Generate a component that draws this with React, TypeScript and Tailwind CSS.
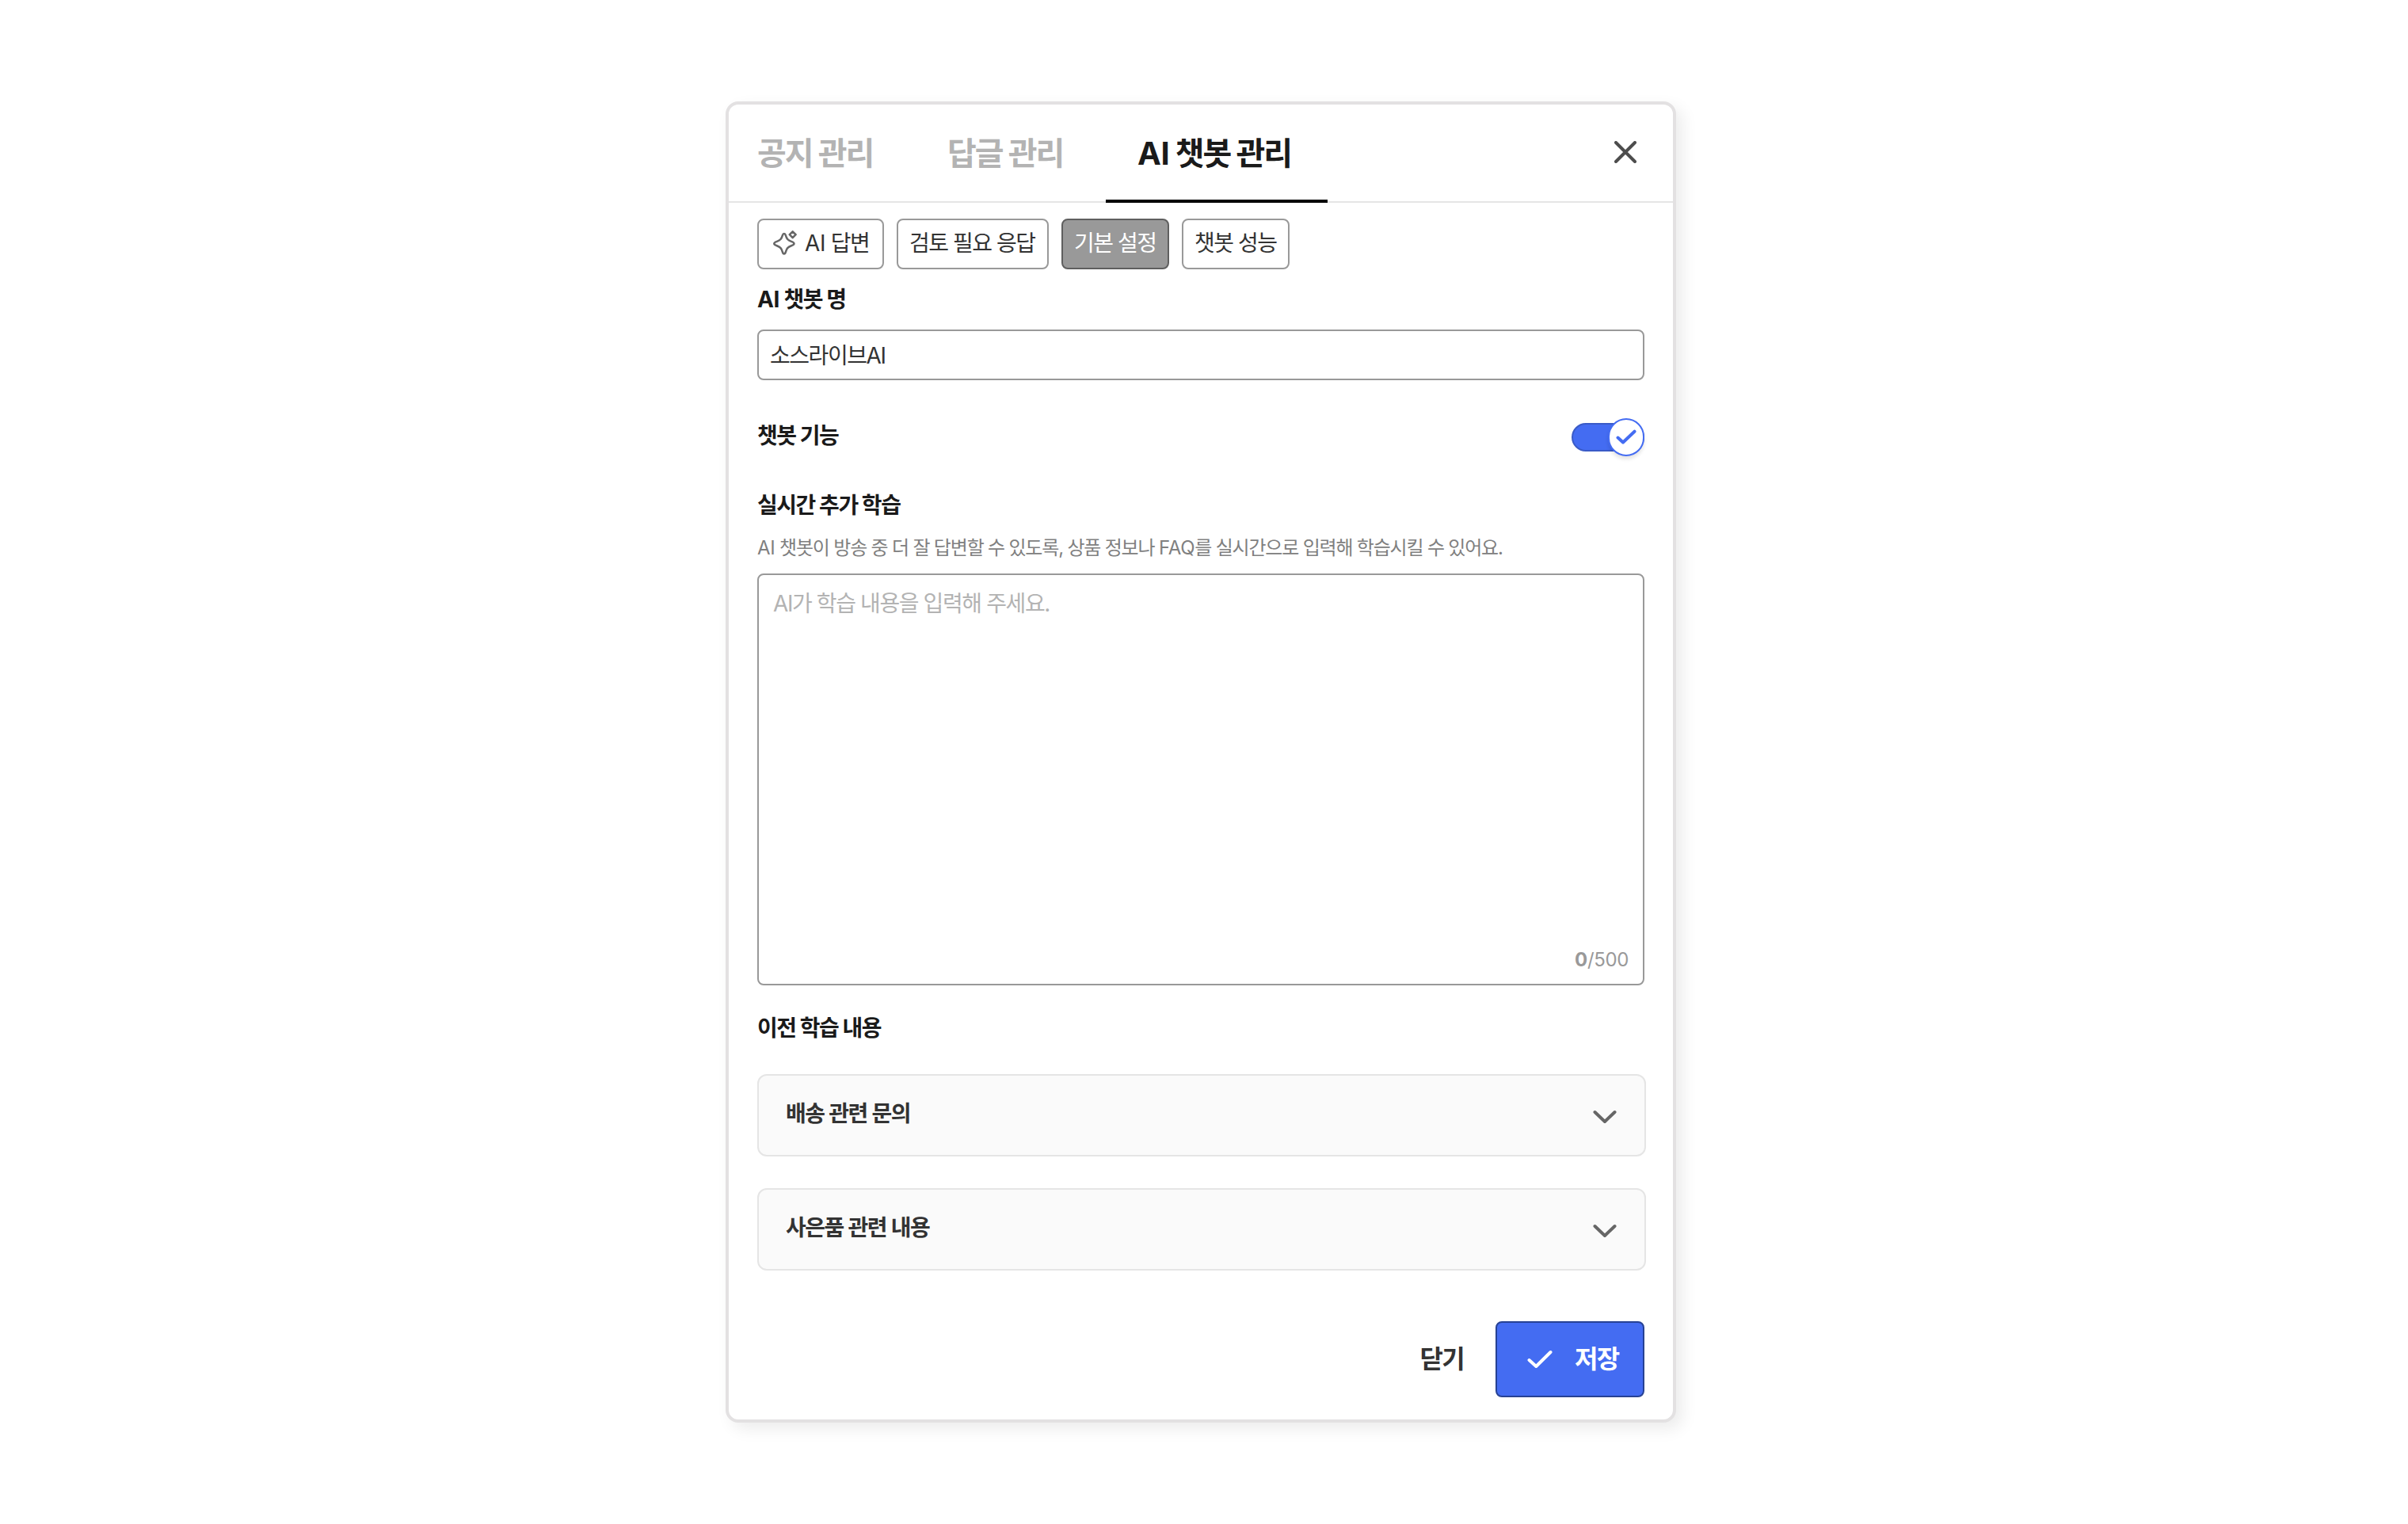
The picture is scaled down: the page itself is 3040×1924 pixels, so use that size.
import React, { useState } from 'react';
import clsx from 'clsx';

const tabs = [
  { id: 'notice', label: '공지 관리' },
  { id: 'reply', label: '답글 관리' },
  { id: 'chatbot', prefix: 'AI', label: ' 챗봇 관리' }
];

const filters = [
  { id: 'answer', prefix: 'AI', label: ' 답변', width: 'w-[160px]' },
  { id: 'review', label: '검토 필요 응답', width: 'w-[192px]' },
  { id: 'settings', label: '기본 설정', width: 'w-[136px]' },
  { id: 'performance', label: '챗봇 성능', width: 'w-[136px]' }
];

const histories = ['배송 관련 문의', '사은품 관련 내용'];

const Latin = ({ children }: { children: React.ReactNode }) => (
  <span className="tracking-[-0.01em]">{children}</span>
);

const SparkleIcon = () => (
  <svg className="h-[32px] w-[32px] shrink-0" viewBox="0 0 32 32" fill="none" stroke="#666" strokeWidth="2.5" strokeLinejoin="round">
    <path d="M13.9 4c1.1 0 1.6.8 2 2.1 1.3 4.4 2.6 6.2 7.1 7.8 1.8.6 3.5 1.3 3.5 2.7s-1.7 2.1-3.5 2.7c-4.5 1.6-5.8 3.4-7.1 7.8-.4 1.3-.9 2.3-2 2.3s-1.600-1-2-2.300c-1.300-4.400-2.600-6.200-7.100-7.800C3 18.700 1.300 18 1.300 16.600s1.700-2.100 3.500-2.700c4.500-1.600 5.800-3.400 7.100-7.800C12.300 4.800 12.800 4 13.900 4Z" />
    <path d="m24.700 1.300 3.900 3.900-3.900 3.900-3.900-3.900Z" />
  </svg>
);

const App: React.FC = () => {
  const [activeTab, setActiveTab] = useState('chatbot');
  const [activeFilter, setActiveFilter] = useState('settings');
  const [name, setName] = useState('소스라이브AI');
  const [content, setContent] = useState('');

  return (
    <div className="flex h-[1924px] w-[3040px] justify-center bg-white pt-[128px] pr-[8px] font-['Inter','Noto_Sans_CJK_KR',sans-serif] text-[#1a1a1a]">
      <div className="flex h-[1668px] w-[1200px] flex-col rounded-[16px] border-4 border-[#e3e1e2] bg-white shadow-[8px_8px_20px_rgba(0,0,0,0.08)]">
        {/* Tabs */}
        <div className="flex h-[124px] shrink-0 items-stretch justify-between border-b-2 border-[#e5e5e5] pr-[46px]">
          <div className="-mb-[2px] flex">
            {tabs.map((tab) => (
              <button
                key={tab.id}
                className={clsx(
                  'border-b-4 pt-[4px] text-left text-[40px] font-bold tracking-[-0.052em] whitespace-nowrap',
                  tab.id === 'notice' && 'w-[240px] pl-[36px]',
                  tab.id === 'reply' && 'w-[236px] pl-[36px]',
                  tab.id === 'chatbot' && 'w-[280px] pl-[40px]',
                  activeTab === tab.id ? 'border-black' : 'border-transparent text-[#b3b3b3]'
                )}
                onClick={() => setActiveTab(tab.id)}
              >
                {tab.prefix && <Latin>{tab.prefix}</Latin>}
                {tab.label}
              </button>
            ))}
          </div>
          <button className="pb-[2px] text-[#4d4d4d]">
            <svg className="h-[28px] w-[28px]" viewBox="0 0 28 28" fill="none" stroke="currentColor" strokeWidth="4" strokeLinecap="round">
              <path d="M2 2 26 26M26 2 2 26" />
            </svg>
          </button>
        </div>

        <div className="flex flex-col px-[36px] pt-[20px]">
          {/* Filters */}
          <div className="flex gap-4">
            {filters.map((filter) => (
              <button
                key={filter.id}
                className={clsx(
                  'flex h-[64px] items-center gap-[8px] rounded-[8px] border-2 pb-[2px] text-[28px] tracking-[-0.052em] whitespace-nowrap',
                  filter.width,
                  filter.id === 'answer' ? 'pl-[18px]' : 'pl-[14px]',
                  activeFilter === filter.id ? 'border-[#5f5f5f] bg-[#999] text-white' : 'border-[#999] text-[#333]'
                )}
                onClick={() => setActiveFilter(filter.id)}
              >
                {filter.id === 'answer' && <SparkleIcon />}
                <span className="whitespace-pre">
                  {filter.prefix && <Latin>{filter.prefix}</Latin>}
                  {filter.label}
                </span>
              </button>
            ))}
          </div>

          {/* Chatbot name */}
          <label className="mt-[18px] h-[40px] text-[28px] leading-[40px] font-bold tracking-[-0.052em]">
            <Latin>AI</Latin> 챗봇 명
          </label>
          <input
            className="mt-[18px] h-[64px] rounded-[8px] border-2 border-[#999] px-[14px] pb-[2px] text-[28px] tracking-[-0.052em] text-[#333] outline-none"
            value={name}
            onChange={(e) => setName(e.target.value)}
          />

          {/* Chatbot switch */}
          <div className="mt-[48px] flex h-[48px] items-center justify-between">
            <span className="pb-[4px] text-[28px] leading-[40px] font-bold tracking-[-0.052em]">챗봇 기능</span>
            <button className="flex h-[36px] w-[92px] items-center justify-end rounded-full border-2 border-[#3a5bc7] bg-[#446cf2]">
              <span className="-mr-[2px] flex h-[48px] w-[46px] shrink-0 items-center justify-center rounded-full border-2 border-[#446cf2] bg-white text-[#446cf2] shadow-[0_4px_4px_rgba(0,0,0,0.1)]">
                <svg className="h-[20px] w-[26px]" viewBox="0 0 26 20" fill="none" stroke="currentColor" strokeWidth="4" strokeLinecap="round" strokeLinejoin="round">
                  <path d="M2.500 10.500 9 16.500 23.500 2.700" />
                </svg>
              </span>
            </button>
          </div>

          {/* Live training */}
          <h2 className="mt-[42px] h-[40px] text-[28px] leading-[40px] font-bold tracking-[-0.052em]">실시간 추가 학습</h2>
          <p className="mt-[16px] h-[36px] text-[24px] leading-[36px] tracking-[-0.05em] text-[#808080]">
            <Latin>AI</Latin> 챗봇이 방송 중 더 잘 답변할 수 있도록, 상품 정보나 <Latin>FAQ</Latin>를 실시간으로 입력해 학습시킬 수 있어요.
          </p>
          <div className="mt-[14px] flex h-[520px] flex-col rounded-[8px] border-2 border-[#999] px-[18px] pt-[16px] pb-[12px]">
            <textarea
              className="flex-1 resize-none text-[28px] leading-[40px] tracking-[-0.05em] text-[#333] outline-none placeholder:text-[#b3b3b3]"
              placeholder="AI가 학습 내용을 입력해 주세요."
              maxLength={500}
              value={content}
              onChange={(e) => setContent(e.target.value)}
            />
            <div className="text-right text-[24px] leading-[36px] tracking-[-0.015em] text-[#999]">
              <b>{content.length}</b>/500
            </div>
          </div>

          {/* Training history */}
          <h2 className="mt-[34px] h-[40px] text-[28px] leading-[40px] font-bold tracking-[-0.052em]">이전 학습 내용</h2>
          <div className="mt-[38px] -mr-[2px] flex flex-col gap-[40px]">
            {histories.map((title) => (
              <button key={title} className="flex h-[104px] items-center justify-between rounded-[12px] border-2 border-[#e5e5e5] bg-[#fafafa] pr-[35px] pl-[34px]">
                <span className="pb-[4px] text-[28px] leading-[40px] font-semibold tracking-[-0.052em] text-[#333]">{title}</span>
                <svg className="mt-[4px] h-[18px] w-[30px]" viewBox="0 0 30 18" fill="none" stroke="#666" strokeWidth="4" strokeLinecap="round" strokeLinejoin="round">
                  <path d="M2.500 3 15 15 27.500 3" />
                </svg>
              </button>
            ))}
          </div>

          {/* Footer */}
          <div className="mt-[64px] flex justify-end gap-[40px] text-[32px] font-bold">
            <button className="tracking-[-0.052em] text-[#333]">닫기</button>
            <button className="flex h-[96px] w-[188px] items-center gap-[28px] rounded-[8px] border-2 border-[#274294] bg-[#446cf2] pl-[38px] tracking-[-0.052em] text-white">
              <svg className="h-[24px] w-[32px]" viewBox="0 0 32 24" fill="none" stroke="currentColor" strokeWidth="4" strokeLinecap="round" strokeLinejoin="round">
                <path d="M2.500 13 11.300 21 29.500 3" />
              </svg>
              저장
            </button>
          </div>
        </div>
      </div>
    </div>
  );
};

export default App;
